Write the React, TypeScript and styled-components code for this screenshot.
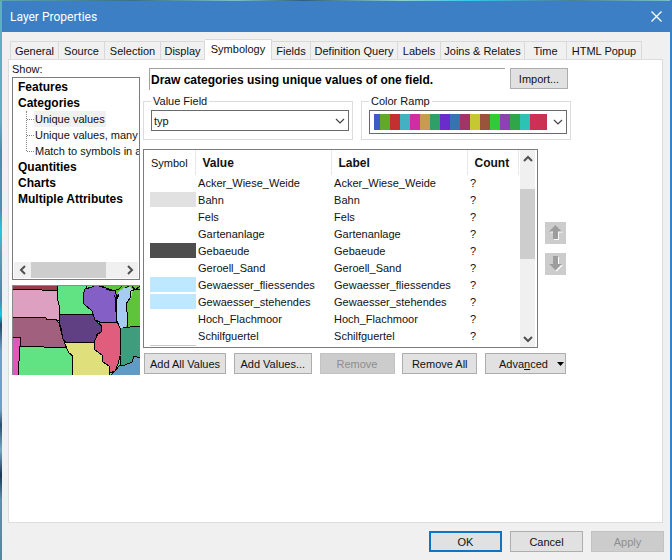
import React from "react";
import styled, { createGlobalStyle, css } from "styled-components";

const GlobalStyle = createGlobalStyle`
  * { box-sizing: border-box; }
  body { margin: 0; background: #4b8fb4; }
  body, button, select { font-family: "Liberation Sans", Arial, sans-serif; font-size: 11px; line-height: 16px; color: #111; }
  button { margin: 0; padding: 0; cursor: default; white-space: nowrap; }
`;

const Desktop = styled.div`
  min-height: 100vh;
  display: flex;
  padding: 1px 2px 0 2px;
  background:
    linear-gradient(#3c7fc5, #3c7fc5) right / 2px 100% no-repeat,
    linear-gradient(90deg, #5fa3ad, #3a6f8c 20%, #7cc0c8 35%, #2f5f80 45%, #8fd0d0 60%, #35c8e8 70%, #4a7f98 85%, #7cc0c8) top / 100% 1px no-repeat,
    linear-gradient(180deg, #5fb0bd 0 120px, #4a8fb0 150px, #4f8fb0 210px, #25c4e8 230px, #5b9fb8 250px, #4f86ad 300px, #10c8ee 315px, #24486a 325px, #6c9fcd 350px, #6c9fcd 410px, #2c4f74 425px, #7ba4c8 450px, #1c3550 475px, #5b93a8 500px, #4d8a9c 100%);
`;

const Dialog = styled.main`
  flex: 1;
  min-width: 0;
  display: flex;
  flex-direction: column;
  background: #f0f0f0;
`;

const TitleBar = styled.header`
  display: flex;
  align-items: center;
  justify-content: space-between;
  height: 31px;
  padding: 0 8px;
  background: #3c7fc5;
  color: #fff;
`;

const Title = styled.h1`
  margin: 0;
  font: 400 12px/16px Roboto, sans-serif;
`;

const CloseButton = styled.button`
  display: flex;
  border: 0;
  background: none;
  color: #fff;
`;

const TabStrip = styled.div`
  display: flex;
  align-items: flex-end;
  height: 27px;
  padding: 0 8px;
  flex: none;
`;

const Tab = styled.button<{ $width: number; $selected?: boolean }>`
  width: ${(p) => p.$width}px;
  height: 18px;
  border: 1px solid #d9d9d9;
  border-left-width: 0;
  border-bottom: 0;
  background: #f0f0f0;
  &:first-child { border-left-width: 1px; }
  ${(p) =>
    p.$selected &&
    css`
      position: relative;
      height: 21px;
      margin-bottom: -1px;
      padding-bottom: 2px;
      background: #fff;
    `}
`;

const Page = styled.section`
  flex: 1;
  display: flex;
  align-items: flex-start;
  gap: 3px;
  margin: 0 7px 0 6px;
  padding: 1px 3px;
  border: 1px solid #dcdcdc;
  background: #fff;
`;

const Sidebar = styled.nav`
  width: 128px;
  flex: none;
  display: flex;
  flex-direction: column;
`;

const TreeBox = styled.div`
  height: 203px;
  display: flex;
  flex-direction: column;
  justify-content: space-between;
  border: 1px solid #7a7c80;
  padding: 1px;
  overflow: hidden;
`;

const Tree = styled.ul`
  margin: 0;
  padding: 0 0 0 4px;
  list-style: none;
`;

const Branch = styled.ul`
  margin: 0 0 8px 8px;
  padding: 0;
  height: 40px;
  list-style: none;
  border-left: 1px dotted #888;
`;

const Category = styled.button`
  display: block;
  height: 16px;
  border: 0;
  background: none;
  font: bold 12px/16px "Liberation Sans", Arial, sans-serif;
  color: #000;
`;

const Leaf = styled.button<{ $selected?: boolean }>`
  display: flex;
  align-items: center;
  height: 16px;
  border: 0;
  background: none;
  &::before {
    content: "";
    width: 7px;
    border-top: 1px dotted #888;
  }
  span {
    padding: 0 1px;
    line-height: 16px;
    background: ${(p) => (p.$selected ? "#f0f0f0" : "none")};
  }
`;

const HScroll = styled.div`
  display: flex;
  align-items: center;
  height: 16px;
  background: #f0f0f0;
  color: #505050;
`;

const VScroll = styled.div`
  display: flex;
  flex-direction: column;
  align-items: center;
  width: 15px;
  margin-right: 2px;
  flex: none;
  background: #f0f0f0;
  color: #505050;
`;

const ScrollButton = styled.button`
  display: flex;
  align-items: center;
  justify-content: center;
  width: 17px;
  height: 17px;
  flex: none;
  border: 0;
  background: none;
  color: inherit;
`;

const HThumb = styled.div`
  width: 75px;
  height: 16px;
  margin-right: auto;
  background: #cdcdcd;
`;

const VThumb = styled.div`
  width: 15px;
  height: 70px;
  margin: 22px 0 auto;
  background: #cdcdcd;
`;

const MapPreview = styled.svg`
  display: block;
  width: 128px;
  height: 90px;
  margin-top: 5px;
`;

const Content = styled.div`
  flex: 1;
  min-width: 0;
  max-width: 428px;
  padding-top: 7px;
`;

const HeadingRow = styled.div`
  display: flex;
  gap: 5px;
  padding: 0 3px 0 6px;
`;

const Heading = styled.h2`
  flex: 1;
  margin: 0;
  height: 22px;
  border: solid #a0a0a0;
  border-width: 1px 0 0 1px;
  padding-left: 1px;
  font: bold 12px/22px "Liberation Sans", Arial, sans-serif;
  color: #000;
  white-space: nowrap;
`;

const PushButton = styled.button<{ $width: number; $primary?: boolean }>`
  width: ${(p) => p.$width}px;
  height: 21px;
  flex: none;
  border: ${(p) => (p.$primary ? "2px solid #0f74c4" : "1px solid #adadad")};
  background: #e1e1e1;
  &:disabled {
    border-color: #c2c2c2;
    background: #cccccc;
    color: #8e8e8e;
  }
`;

const MenuButton = styled(PushButton)`
  display: flex;
  align-items: center;
  justify-content: space-between;
  padding: 0 1px 0 13px;
`;

const Fields = styled.div`
  display: flex;
  gap: 8px;
  margin-top: 3px;
`;

const FieldGroup = styled.fieldset`
  flex: 1;
  min-width: 0;
  height: 47px;
  margin: 0;
  padding: 1px 3px 0 7px;
  border: 1px solid #dcdcdc;
`;

const Legend = styled.legend`
  padding: 0 2px;
`;

const SelectWrap = styled.div`
  position: relative;
  svg {
    position: absolute;
    right: 4px;
    top: 7px;
    pointer-events: none;
  }
`;

const Select = styled.select`
  appearance: none;
  display: block;
  width: 100%;
  height: 21px;
  padding: 0 2px;
  border: 1px solid #6a6a6a;
  border-radius: 0;
  background: #fff;
`;

const RampButton = styled.button`
  display: flex;
  align-items: center;
  width: 100%;
  height: 24px;
  padding: 0 3px 0 4px;
  border: 1px solid #6a6a6a;
  background: #fff;
  svg { margin-left: auto; }
`;

const Ramp = styled.span`
  display: flex;
  height: 16px;
`;

const Stop = styled.span<{ $color: string; $width: number }>`
  width: ${(p) => p.$width}px;
  background: ${(p) => p.$color};
`;

const TableArea = styled.div`
  display: flex;
  align-items: center;
  gap: 7px;
  margin-top: 9px;
`;

const ListFrame = styled.div`
  flex: 1;
  min-width: 0;
  display: flex;
  justify-content: space-between;
  border: 1px solid #7a7c80;
`;

const Table = styled.table`
  width: 374px;
  table-layout: fixed;
  border-collapse: collapse;
  td { padding: 0; }
`;

const HeadCell = styled.th<{ $width: number; $bold?: boolean }>`
  width: ${(p) => p.$width}px;
  height: 25px;
  padding: 0 0 0 7px;
  border-right: 1px solid #e8e8e8;
  text-align: left;
  font-weight: 400;
  ${(p) => p.$bold && css`font: bold 12px/16px "Liberation Sans", Arial, sans-serif;`}
`;

const Cell = styled.td`
  height: 17px;
  white-space: nowrap;
  line-height: 17px;
`;

const SymbolCell = styled.td`
  vertical-align: top;
`;

const Swatch = styled.div<{ $color: string; $clipped?: boolean }>`
  width: 46px;
  height: ${(p) => (p.$clipped ? 1 : 15)}px;
  margin: 0 0 ${(p) => (p.$clipped ? 1 : 0)}px 6px;
  background: ${(p) => p.$color};
`;

const Arrows = styled.div`
  display: flex;
  flex-direction: column;
  gap: 9px;
  width: 26px;
`;

const ArrowButton = styled.button`
  display: flex;
  align-items: center;
  justify-content: center;
  width: 21px;
  height: 22px;
  border: 0;
  background: #cccccc;
`;

const Actions = styled.div`
  display: flex;
  justify-content: space-between;
  padding: 0 5px 0 1px;
  margin-top: 5px;
`;

const Footer = styled.footer`
  display: flex;
  justify-content: flex-end;
  gap: 8px;
  padding: 8px 6px;
`;

const tabs: [string, number][] = [
  ["General", 49], ["Source", 46], ["Selection", 56], ["Display", 44], ["Symbology", 67], ["Fields", 39],
  ["Definition Query", 87], ["Labels", 43], ["Joins & Relates", 84], ["Time", 42], ["HTML Popup", 75],
];

const ramp: [string, number][] = [
  ["#3d5cc4", 6], ["#62a82c", 10], ["#c4302f", 10], ["#43b0c4", 10], ["#d02ca4", 10], ["#c89c50", 10],
  ["#2f9f68", 10], ["#6a2ccb", 10], ["#3773ad", 10], ["#a03566", 10], ["#c6c832", 10], ["#99543a", 10],
  ["#30cc36", 10], ["#8d42b4", 10], ["#30a649", 10], ["#2bc4b4", 10], ["#cc3052", 17],
];

const rows: [string, string?][] = [
  ["Acker_Wiese_Weide"], ["Bahn", "#e1e1e1"], ["Fels"], ["Gartenanlage"], ["Gebaeude", "#4e4e4e"],
  ["Geroell_Sand"], ["Gewaesser_fliessendes", "#bee8ff"], ["Gewaesser_stehendes", "#bee8ff"],
  ["Hoch_Flachmoor"], ["Schilfguertel"],
];

const rotation = { down: 0, up: 180, left: 90, right: 270 };

function Chevron({ dir = "down", bold }: { dir?: keyof typeof rotation; bold?: boolean }) {
  return (
    <svg width="10" height="8" viewBox="-5 -4 10 8" overflow="visible" aria-hidden="true">
      <path d="M-4 -2 L0 2 L4 -2" fill="none" stroke={bold ? "#505050" : "#444"} strokeWidth={bold ? 2 : 1.2} transform={`rotate(${rotation[dir]})`} />
    </svg>
  );
}

function Arrow({ down }: { down?: boolean }) {
  const d = down ? "M5 0h5v8h4l-6.500 6.500L1 8h4z" : "M7.500 0L14 6.500h-4V14H5V6.500H1z";
  return (
    <svg width="16" height="16" viewBox="0 0 16 16" aria-hidden="true">
      <path d={d} fill="#fff" transform="translate(1 1)" />
      <path d={d} fill="#9d9d9d" />
    </svg>
  );
}

function StatesMap() {
  return (
    <MapPreview viewBox="0 0 128 90" role="img" aria-label="Unique values preview">
      <rect width="128" height="90" fill="#62e383" />
      <g stroke="#000" strokeWidth="1" strokeLinejoin="round" shapeRendering="crispEdges">
        <path d="M-1-1H46V6L30 5L-1 4z" fill="#993c49" />
        <path d="M-1 4L30 5L45 6L47 10L45 12L48 20L47 36L43 34L35 35L34 33L-1 32z" fill="#dea0c1" />
        <path d="M-1 32L34 33L35 35L43 34L47 38L50 50L52 56L56 63L8 61V52H-1z" fill="#a2607f" />
        <path d="M-1 52H8L9 61L7 91H-1z" fill="#df5ab8" />
        <path d="M8 61L56 63L58 68L60 71V91H6z" fill="#62e383" />
        <path d="M46-1H74V7L71 10L72 19L80 25L81 29H47V20L45 12z" fill="#62e383" />
        <path d="M47 29H81L83 35L90 42L89 47L85 49L83 57L54 57L51 54L49 43L47 37z" fill="#603f83" />
        <path d="M52 57H82L83 65L90 70L91 77L97 80L98 91H60V70L57 68z" fill="#dfe07b" />
        <path d="M87 37H106L109 45L108 71L106 79L103 86L98 88L97 81L91 77L90 70L83 65L82 57L86 49L89 47L90 42z" fill="#e15d7e" />
        <path d="M98 91L103 86L107 81L113 79L120 77L122 71L129 73V91z" fill="#5f9bc5" />
        <path d="M84-1H129V42L115 43L108 42L104 36L105 16L103 11L97 4z" fill="#5fc43b" />
        <path d="M109 43L128 41V73L122 71L120 77L113 80L108 81V71z" fill="#3f9d7e" />
        <path d="M73 4L80 2L84 0L97 4L103 6L105 12L103 17L105 37H88L83 35L80 26L72 19L71 10z" fill="#835fc6" />
        <path d="M106 7L112 3L119 2L121 5L119 13L114 19L115 28L116 36L114 42L108 43L105 36L104 18z" fill="#a7ccf2" stroke="none" />
        <path d="M94 4L101 6L107 4L110 1M102 10L104 14L107 9L104 17L105 36L108 43M115 43L116 36L115 27L114 19L118 13L119 6L124 4L129 5M120 1L123 5L128 1M113 3L119 0" fill="none" />
      </g>
      <path d="M0 .5H128M.5 0V90" stroke="#8b8b8b" />
    </MapPreview>
  );
}

export default function App() {
  return (
    <Desktop>
      <GlobalStyle />
      <Dialog>
        <TitleBar>
          <Title>Layer Properties</Title>
          <CloseButton aria-label="Close">
            <svg width="11" height="11" viewBox="0 0 11 11"><path d="M.5.5l10 10M10.5.5l-10 10" stroke="currentColor" strokeWidth="1.3" /></svg>
          </CloseButton>
        </TitleBar>
        <TabStrip role="tablist">
          {tabs.map(([name, width]) => (
            <Tab key={name} role="tab" aria-selected={name === "Symbology"} $width={width} $selected={name === "Symbology"}>{name}</Tab>
          ))}
        </TabStrip>
        <Page role="tabpanel" aria-label="Symbology">
          <Sidebar>
            <span>Show:</span>
            <TreeBox>
              <Tree>
                <li><Category>Features</Category></li>
                <li>
                  <Category>Categories</Category>
                  <Branch>
                    <li><Leaf $selected><span>Unique values</span></Leaf></li>
                    <li><Leaf><span>Unique values, many</span></Leaf></li>
                    <li><Leaf><span>Match to symbols in a</span></Leaf></li>
                  </Branch>
                </li>
                <li><Category>Quantities</Category></li>
                <li><Category>Charts</Category></li>
                <li><Category>Multiple Attributes</Category></li>
              </Tree>
              <HScroll>
                <ScrollButton aria-label="Scroll left"><Chevron dir="left" bold /></ScrollButton>
                <HThumb />
                <ScrollButton aria-label="Scroll right"><Chevron dir="right" bold /></ScrollButton>
              </HScroll>
            </TreeBox>
            <StatesMap />
          </Sidebar>
          <Content>
            <HeadingRow>
              <Heading>Draw categories using unique values of one field.</Heading>
              <PushButton $width={58}>Import...</PushButton>
            </HeadingRow>
            <Fields>
              <FieldGroup>
                <Legend><label htmlFor="value-field">Value Field</label></Legend>
                <SelectWrap>
                  <Select id="value-field" defaultValue="typ"><option>typ</option></Select>
                  <Chevron />
                </SelectWrap>
              </FieldGroup>
              <FieldGroup>
                <Legend id="ramp-label">Color Ramp</Legend>
                <RampButton aria-labelledby="ramp-label" aria-haspopup="listbox">
                  <Ramp>{ramp.map(([color, width]) => <Stop key={color} $color={color} $width={width} />)}</Ramp>
                  <Chevron />
                </RampButton>
              </FieldGroup>
            </Fields>
            <TableArea>
              <ListFrame>
                <Table>
                  <thead>
                    <tr>
                      <HeadCell $width={51}>Symbol</HeadCell>
                      <HeadCell $width={136} $bold>Value</HeadCell>
                      <HeadCell $width={136} $bold>Label</HeadCell>
                      <HeadCell $width={51} $bold>Count</HeadCell>
                    </tr>
                  </thead>
                  <tbody>
                    {rows.map(([name, color]) => (
                      <tr key={name}>
                        <SymbolCell>{color && <Swatch $color={color} />}</SymbolCell>
                        <Cell>&nbsp;{name}</Cell>
                        <Cell>&nbsp;{name}</Cell>
                        <Cell>&nbsp;?</Cell>
                      </tr>
                    ))}
                    <tr aria-hidden="true">
                      <SymbolCell><Swatch $color="#c8c8c8" $clipped /></SymbolCell>
                    </tr>
                  </tbody>
                </Table>
                <VScroll>
                  <ScrollButton aria-label="Scroll up"><Chevron dir="up" bold /></ScrollButton>
                  <VThumb />
                  <ScrollButton aria-label="Scroll down"><Chevron bold /></ScrollButton>
                </VScroll>
              </ListFrame>
              <Arrows>
                <ArrowButton aria-label="Move up" disabled><Arrow /></ArrowButton>
                <ArrowButton aria-label="Move down" disabled><Arrow down /></ArrowButton>
              </Arrows>
            </TableArea>
            <Actions>
              <PushButton $width={82}>Add All Values</PushButton>
              <PushButton $width={78}>Add Values...</PushButton>
              <PushButton $width={75} disabled>Remove</PushButton>
              <PushButton $width={75}>Remove All</PushButton>
              <MenuButton $width={81} aria-haspopup="menu">
                <span>Adva<u>n</u>ced</span>
                <svg width="7" height="4" viewBox="0 0 7 4" aria-hidden="true"><path d="M0 0h7L3.5 4z" /></svg>
              </MenuButton>
            </Actions>
          </Content>
        </Page>
        <Footer>
          <PushButton $width={73} $primary>OK</PushButton>
          <PushButton $width={73}>Cancel</PushButton>
          <PushButton $width={73} disabled>Apply</PushButton>
        </Footer>
      </Dialog>
    </Desktop>
  );
}
